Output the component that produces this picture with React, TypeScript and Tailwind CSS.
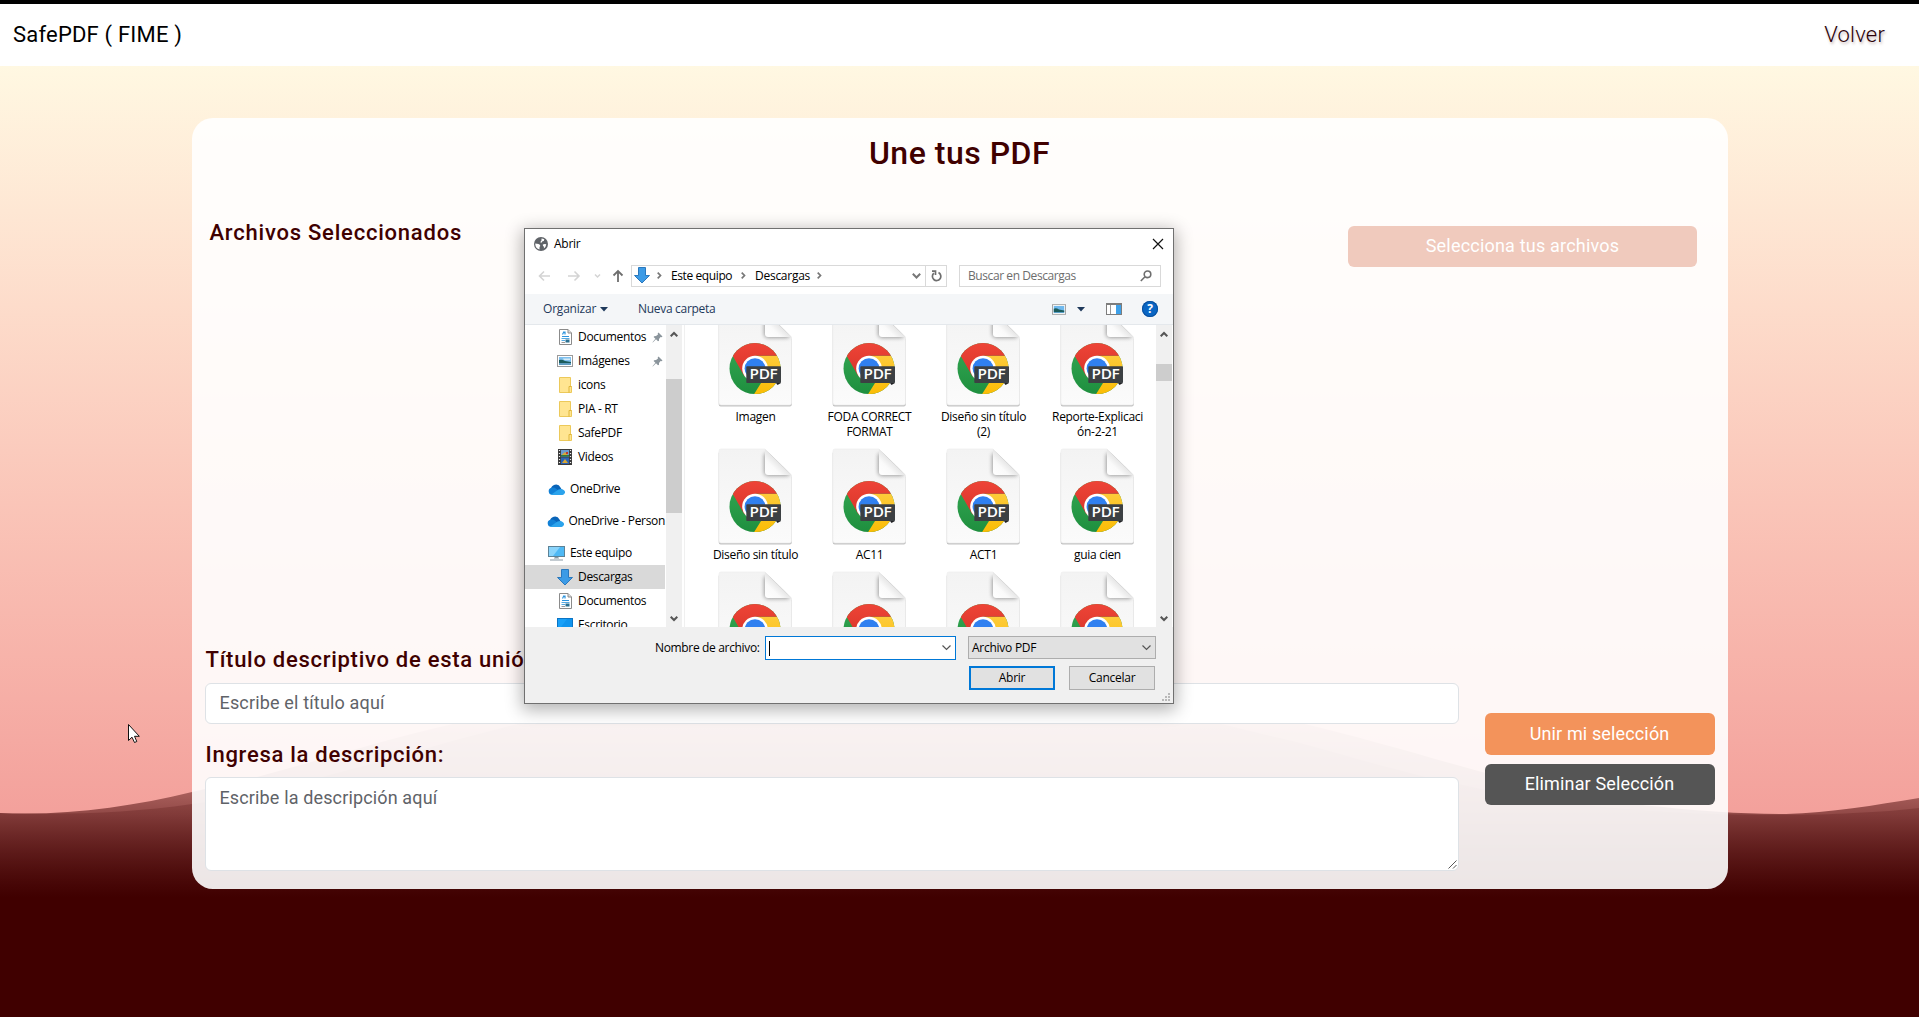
import React from "react";

function PdfIcon() {
  return (
    <svg width="77" height="99" viewBox="-2 -2 77 99" className="block shrink-0">
      <defs>
        <linearGradient id="paper" x1="0" y1="0" x2="0" y2="1">
          <stop offset="0" stopColor="#f3f3f3" />
          <stop offset="1" stopColor="#fbfbfb" />
        </linearGradient>
        <linearGradient id="fold" x1="0" y1="1" x2="1" y2="0">
          <stop offset="0" stopColor="#ffffff" />
          <stop offset="0.3" stopColor="#fafafa" />
          <stop offset="0.5" stopColor="#e6e6e6" />
        </linearGradient>
        <linearGradient id="red" x1="0" y1="0" x2="0" y2="1">
          <stop offset="0" stopColor="#ee4437" />
          <stop offset="1" stopColor="#d8352a" />
        </linearGradient>
        <linearGradient id="green" x1="0" y1="0" x2="0" y2="1">
          <stop offset="0" stopColor="#34a853" />
          <stop offset="1" stopColor="#1e8e3e" />
        </linearGradient>
        <linearGradient id="yellow" x1="0" y1="0" x2="0" y2="1">
          <stop offset="0" stopColor="#fdcb3a" />
          <stop offset="1" stopColor="#fbbc04" />
        </linearGradient>
        <filter id="soft" x="-20%" y="-20%" width="140%" height="140%">
          <feGaussianBlur stdDeviation="2" />
        </filter>
        <clipPath id="page">
          <path d="M2 0H46L72.500 26V92a2 2 0 0 1-2 2H2a2 2 0 0 1-2-2V2a2 2 0 0 1 2-2z" />
        </clipPath>
        <clipPath id="disc">
          <circle cx="36" cy="57.6" r="25.5" />
        </clipPath>
      </defs>
      <path d="M2 2H46L72.800 28V93.500a2 2 0 0 1-2 2H1.700a2 2 0 0 1-2-2V4a2 2 0 0 1 2-2z" fill="#000" opacity="0.24" />
      <path d="M2 0H46L72.500 26V92a2 2 0 0 1-2 2H2a2 2 0 0 1-2-2V2a2 2 0 0 1 2-2z" fill="url(#paper)" stroke="#ececec" strokeWidth="0.6" />
      <g clipPath="url(#page)">
        <path d="M45.500 5V23a3.500 3.500 0 0 0 3.500 3.500H70V20L52 4z" fill="#000" opacity="0.42" filter="url(#soft)" />
      </g>
      <path d="M46 0L72.500 26H49a3 3 0 0 1-3-3z" fill="url(#fold)" />
      <g clipPath="url(#disc)">
        <rect x="10" y="32" width="52" height="52" fill="url(#green)" />
        <path d="M36 44.800H62V84H34.500L47 64z" fill="url(#yellow)" />
        <path d="M10 32H62V44.800H36L25.500 65.500L13.500 44.500z" fill="url(#red)" />
      </g>
      <circle cx="36" cy="57.600" r="12.800" fill="#fff" />
      <circle cx="36" cy="57.600" r="10.400" fill="#3080f0" />
      <path d="M57 72H62L58.500 74z" fill="#202124" />
      <rect x="27.300" y="55.200" width="34.700" height="16.800" rx="0.800" fill="#3c4043" />
      <text x="30.500" y="68.200" fontFamily="Open Sans" fontWeight="600" fontSize="13.500" textLength="28" lengthAdjust="spacingAndGlyphs" fill="#fff">
        PDF
      </text>
    </svg>
  );
}

function FileItem({ name }: { name?: string }) {
  return (
    <div className="flex w-[114px] flex-col items-center">
      <PdfIcon />
      {name && (
        <p className="mt-[1px] w-[106px] whitespace-pre pl-px text-center text-[12px] leading-[15px] tracking-[-0.3px]">{name}</p>
      )}
    </div>
  );
}

const DownArrow = () => (
  <svg width="16" height="17" viewBox="0 0 16 17">
    <path d="M4.500 0.500H11.500V8.500H15.500L8 16L0.500 8.500H4.500z" fill="#3c9be6" stroke="#2a78bd" />
  </svg>
);
const DocIcon = () => (
  <svg width="13" height="16" viewBox="0 0 13 16">
    <path d="M0.500 0.500H9L12.500 4V15.500H0.500z" fill="#fff" stroke="#8b8b8b" />
    <path d="M9 0.500V4H12.500" fill="#ddd" stroke="#8b8b8b" />
    <path d="M5 2.500L3.500 5.500M6 2.500V5.500M3 7.500H10" stroke="#2c93dd" strokeWidth="1.200" fill="none" />
    <path d="M2.500 9.500H10.500M2.500 11.500H6" stroke="#55a9e2" />
    <rect x="6.500" y="10.500" width="4" height="3" fill="#2b6f8f" />
    <path d="M2.500 13.500H6" stroke="#999" />
  </svg>
);
const PictureIcon = () => (
  <svg width="16" height="12" viewBox="0 0 16 12">
    <rect x="0.500" y="0.500" width="15" height="11" fill="#fff" stroke="#9a9a9a" />
    <rect x="2" y="2" width="12" height="8" fill="#7fc0ee" />
    <path d="M2 5Q5 4 8 6L14 7V8H2z" fill="#1c5c5c" />
    <rect x="2" y="8" width="12" height="2" fill="#5f9cc0" />
    <path d="M6 3.500H13V5H7z" fill="#d5ecf8" />
  </svg>
);
const FolderIcon = () => (
  <svg width="13" height="17" viewBox="0 0 13 17">
    <path d="M0.500 0.500H11.500V9.500H12.500V15.500H0.500z" fill="#ffe591" stroke="#ecc95a" />
    <path d="M12.500 9.500H10V15.500" fill="none" stroke="#dfb63a" />
  </svg>
);
const VideoIcon = () => (
  <svg width="14" height="16" viewBox="0 0 14 16">
    <rect width="14" height="16" fill="#3c3c3c" />
    <path d="M1.500 1V16M12.500 1V16" stroke="#eee" strokeDasharray="1 2" strokeWidth="1.200" />
    <rect x="3" y="1" width="8" height="6.500" fill="#6a9bd0" />
    <rect x="3" y="8.500" width="8" height="6.500" fill="#2b63b5" />
    <path d="M3 6.500L7 3L10 6.500zM4 14L7 10L10 14z" fill="#d9a836" />
    <path d="M8 3h2v2h-2z" fill="#c0392b" />
    <path d="M3 6h8v1.500h-8z" fill="#2f7a3d" />
  </svg>
);
const CloudIcon = () => (
  <svg width="17" height="11" viewBox="0 0 17 11" className="-ml-[1px]">
    <path d="M3 6A5 5 0 0 1 12.500 3.500L14 6L7 9z" fill="#0a64b8" />
    <path d="M4 10.800A3.600 3.600 0 0 1 3.500 3.700Q6 3 8.500 5L13 8.500L9 10.800z" fill="#1180d6" />
    <path d="M3 10.700L10.500 5.500Q13.500 4 16 6.200A2.700 2.700 0 0 1 14.500 11H4z" fill="#2ba3ec" />
  </svg>
);
const PcIcon = () => (
  <svg width="17" height="15" viewBox="0 0 17 15" className="-ml-[1px]">
    <rect x="0.500" y="0.500" width="16" height="10" fill="#4fb9f5" stroke="#5d8296" />
    <path d="M1 1H12L5 10H1z" fill="#8ad4fb" />
    <path d="M6 12H11M2 14H15" stroke="#8798a3" />
    <path d="M8.500 11V12" stroke="#8798a3" strokeWidth="3" />
  </svg>
);
const DesktopIcon = () => (
  <svg width="16" height="14" viewBox="0 0 16 14">
    <rect x="0.500" y="0.500" width="15" height="13" fill="#18a0f8" stroke="#0b74c4" />
    <path d="M1 13L10 1H15V13z" fill="#0f94ee" />
  </svg>
);
const PinIcon = () => (
  <svg width="11" height="11" viewBox="0 0 11 11" className="absolute left-[127px]">
    <path d="M6.500 0.500L10.500 4.500L9.500 5.300L8.600 5L7 7L7 8.800L6 9.300L4 7.300L0.800 10.500L0.500 10.200L3.400 6.700L1.600 5L2.200 4.200L4 4L6 2.400L5.700 1.400z" fill="#8b959c" />
  </svg>
);

type Row = { label: string; icon: React.ReactNode; indent?: boolean; pin?: boolean; active?: boolean; gap?: boolean };
const rows: Row[] = [
  { label: "Documentos", icon: <DocIcon />, indent: true, pin: true },
  { label: "Imágenes", icon: <PictureIcon />, indent: true, pin: true },
  { label: "icons", icon: <FolderIcon />, indent: true },
  { label: "PIA - RT", icon: <FolderIcon />, indent: true },
  { label: "SafePDF", icon: <FolderIcon />, indent: true },
  { label: "Videos", icon: <VideoIcon />, indent: true },
  { label: "OneDrive", icon: <CloudIcon />, gap: true },
  { label: "OneDrive - Person", icon: <CloudIcon />, gap: true },
  { label: "Este equipo", icon: <PcIcon />, gap: true },
  { label: "Descargas", icon: <DownArrow />, indent: true, active: true },
  { label: "Documentos", icon: <DocIcon />, indent: true },
  { label: "Escritorio", icon: <DesktopIcon />, indent: true },
];

function Chevron({ d, w = 8, h = 5, color = "#555", sw = 2 }: { d: string; w?: number; h?: number; color?: string; sw?: number }) {
  return (
    <svg width={w} height={h} viewBox={`0 0 ${w} ${h}`} className="shrink-0">
      <path d={d} fill="none" stroke={color} strokeWidth={sw} />
    </svg>
  );
}
const Up = () => <Chevron d="M0.700 5.300L4 2L7.300 5.300" h={6} />;
const Down = () => <Chevron d="M0.700 0.700L4 4L7.300 0.700" h={6} />;
const Right = () => <Chevron d="M0.700 0.700L3.500 3.500L0.700 6.300" w={5} h={7} color="#777" sw={1.7} />;

function Dialog() {
  return (
    <div className="absolute left-[524px] top-[228px] flex h-[476px] w-[650px] flex-col border border-[#707070] bg-white font-['Open_Sans',sans-serif] text-[12px] tracking-[-0.26px] text-black shadow-[0_4px_16px_2px_rgba(0,0,0,0.3)]">
      <div className="flex h-[29px] items-center pl-[9px] pr-[9px]">
        <svg width="14" height="14" viewBox="0 0 14 14">
          <circle cx="7" cy="7" r="7" fill="#5f6368" />
          <path d="M1.300 6.500Q3 6.500 4.500 7Q6.300 7.500 6.300 9Q5.500 9.500 5.500 10.500V12.500Q1.500 11.500 1.300 7.500zM7.500 1.400Q9 1.400 10.300 2.300L9.800 4Q8 4 8 5Q7.500 6 6.500 5.500Q6.300 4.500 7.500 3.500zM8.800 7.500Q10 6.800 12.300 7.200Q12 10 9.800 11.500L10 9.700Q8.600 9.200 8.800 7.500z" fill="#fff" />
        </svg>
        <span className="ml-[6px] grow">Abrir</span>
        <svg width="12" height="12" viewBox="0 0 12 12">
          <path d="M1 1L11 11M11 1L1 11" stroke="#111" strokeWidth="1.200" />
        </svg>
      </div>
      <div className="flex h-[36px] items-center pb-px">
        <svg width="92" height="16" viewBox="0 0 92 16" className="ml-[13px] shrink-0" fill="none">
          <path d="M12 8H1.500M6 3.500L1.500 8L6 12.500" stroke="#d4d4d4" strokeWidth="1.600" />
          <path d="M30 8H41M36.500 3.500L41 8L36.500 12.500" stroke="#d4d4d4" strokeWidth="1.600" />
          <path d="M57 6.500L59.500 9L62 6.500" stroke="#d4d4d4" strokeWidth="1.500" />
          <path d="M80 14V3M75.500 7.500L80 3L84.500 7.500" stroke="#6e6e6e" strokeWidth="1.800" />
        </svg>
        <div className="ml-[1px] flex h-[22px] w-[316px] items-center border border-[#d9d9d9]">
          <span className="ml-[2px]"><DownArrow /></span>
          <span className="ml-[7px]"><Right /></span>
          <span className="ml-[9px] w-[61px] whitespace-nowrap tracking-[-0.4px]">Este equipo</span>
          <span className="ml-[9px]"><Right /></span>
          <span className="ml-[9px] w-[53px]">Descargas</span>
          <span className="ml-[9px] grow"><Right /></span>
          <Chevron d="M0.800 0.800L4.500 4.500L8.200 0.800" w={9} h={6} color="#777" />
          <span className="ml-[4px] flex h-full w-[21px] items-center justify-center border-l border-[#d9d9d9]">
            <svg width="11" height="12" viewBox="0 0 11 12" fill="none" stroke="#6e6e6e" strokeWidth="1.700">
              <path d="M7.500 2.600A4.200 4.200 0 1 1 2.800 3.200M1 1.200L4.500 1.200V5" />
            </svg>
          </span>
        </div>
        <div className="ml-[12px] flex h-[22px] w-[202px] items-center border border-[#d9d9d9] pl-[8px] pr-[8px] text-[#6d6d6d]">
          <span className="grow tracking-[-0.42px]">Buscar en Descargas</span>
          <svg width="12" height="12" viewBox="0 0 12 12" fill="none" stroke="#6e6e6e" strokeWidth="1.600">
            <circle cx="7.500" cy="4.300" r="3.300" />
            <path d="M5 6.800L0.800 11" />
          </svg>
        </div>
      </div>
      <div className="flex h-[31px] items-center border-b border-[#e4e8ec] bg-[#f4f6f8] text-[#1e395b]">
        <span className="ml-[18px] w-[51px] tracking-[-0.2px]">Organizar</span>
        <svg width="8" height="5" viewBox="0 0 8 5" className="ml-[6px]"><path d="M0 0H8L4 4.500z" fill="#1e395b" /></svg>
        <span className="ml-[30px] grow tracking-[-0.3px]">Nueva carpeta</span>
        <svg width="14" height="11" viewBox="0 0 16 12"><rect x="0.500" y="0.500" width="15" height="11" fill="#fff" stroke="#9a9a9a" /><rect x="2" y="2" width="12" height="8" fill="#6fb9ee" /><path d="M2 5Q5 4 8 6L14 7V9H2z" fill="#1c5c5c" /></svg>
        <svg width="8" height="5" viewBox="0 0 8 5" className="ml-[11px]"><path d="M0 0H8L4 4.500z" fill="#1e395b" /></svg>
        <svg width="16" height="12" viewBox="0 0 16 12" className="ml-[21px]">
          <rect x="0.500" y="0.500" width="15" height="11" fill="#fff" stroke="#7d7d7d" />
          <path d="M0 1H16" stroke="#7d7d7d" strokeWidth="2" />
          <path d="M4.500 2V11" stroke="#999" />
          <rect x="10" y="2" width="5" height="9" fill="#3ea0e8" />
        </svg>
        <span className="ml-[20px] mr-[15px] flex size-[16px] items-center justify-center rounded-full bg-[#0a66c4] text-[12px] font-bold text-white ring-1 ring-inset ring-[#0a4f9c]">?</span>
      </div>
      <div className="flex h-[302px] overflow-hidden">
        <div className="w-[141px] overflow-hidden">
          <div className="flex w-[140px] flex-col">
            {rows.map((r, i) => (
              <div
                key={i}
                className={`relative flex h-[24px] shrink-0 items-center ${r.gap ? "mt-[8px]" : ""} ${r.active ? "bg-[#d9d9d9]" : ""} ${r.indent ? "pl-[31px]" : "pl-[23px]"}`}
              >
                <span className="flex w-[18px] justify-center">{r.icon}</span>
                <span className="ml-[4px] whitespace-nowrap tracking-[-0.33px]">{r.label}</span>
                {r.pin && <PinIcon />}
              </div>
            ))}
          </div>
        </div>
        <div className="flex w-[16px] flex-col items-center bg-[#f0f0f0]">
          <span className="flex h-[17px] items-center"><Up /></span>
          <div className="mt-[37px] h-[134px] w-full bg-[#cdcdcd]" />
          <span className="mt-auto flex h-[17px] items-center"><Down /></span>
        </div>
        <div className="ml-[2px] flex w-[472px] flex-col overflow-hidden border-l border-[#f0f0f0]">
          <div className="-mt-[16px] ml-[13px] flex h-[138px] shrink-0">
            <FileItem name="Imagen" />
            <FileItem name={"FODA CORRECT\nFORMAT"} />
            <FileItem name={"Diseño sin título\n(2)"} />
            <FileItem name={"Reporte-Explicaci\nón-2-21"} />
          </div>
          <div className="ml-[13px] flex h-[123px] shrink-0">
            <FileItem name="Diseño sin título" />
            <FileItem name="AC11" />
            <FileItem name="ACT1" />
            <FileItem name="guia cien" />
          </div>
          <div className="ml-[13px] flex shrink-0">
            <FileItem />
            <FileItem />
            <FileItem />
            <FileItem />
          </div>
        </div>
        <div className="flex w-[16px] flex-col items-center bg-[#f0f0f0]">
          <span className="flex h-[17px] items-center"><Up /></span>
          <div className="mt-[22px] h-[17px] w-full bg-[#cdcdcd]" />
          <span className="mt-auto flex h-[17px] items-center"><Down /></span>
        </div>
      </div>
      <div className="relative grow bg-[#f0f0f0] pt-[9px]">
        <div className="flex items-center">
          <span className="ml-[130px] w-[110px] whitespace-nowrap tracking-[-0.34px]">Nombre de archivo:</span>
          <div className="flex h-[24px] w-[191px] items-center border border-[#0078d7] bg-white pl-[3px] pr-[4px]">
            <div className="mr-auto h-[15px] w-px bg-black" />
            <Chevron d="M0.500 0.500L4.500 4.500L8.500 0.500" w={9} h={6} sw={1.2} />
          </div>
          <div className="mb-px ml-[12px] flex h-[23px] w-[188px] items-center border border-[#adadad] bg-[#e1e1e1] pl-[3px] pr-[4px]">
            <span className="mr-auto">Archivo PDF</span>
            <Chevron d="M0.500 0.500L4.500 4.500L8.500 0.500" w={9} h={6} sw={1.2} />
          </div>
        </div>
        <div className="ml-[444px] mt-[6px] flex gap-[14px]">
          <div className="flex h-[24px] w-[86px] items-center justify-center border-2 border-[#0078d7] bg-[#e1e1e1]">Abrir</div>
          <div className="flex h-[24px] w-[86px] items-center justify-center border border-[#adadad] bg-[#e1e1e1]">Cancelar</div>
        </div>
        <svg width="8" height="8" viewBox="0 0 8 8" className="absolute bottom-[2px] right-[3px]" fill="#b8b8b8">
          <path d="M6 0h2v2h-2zM6 3h2v2h-2zM6 6h2v2h-2zM3 3h2v2h-2zM3 6h2v2h-2zM0 6h2v2h-2z" />
        </svg>
      </div>
    </div>
  );
}

function Waves() {
  return (
    <svg width="1919" height="951" viewBox="0 66 1919 951" className="absolute inset-0">
      <defs>
        <linearGradient id="outer" gradientUnits="userSpaceOnUse" x1="0" y1="700" x2="0" y2="897">
          <stop offset="0" stopColor="#400000" stopOpacity="0.08" />
          <stop offset="0.466" stopColor="#400000" stopOpacity="0.42" />
          <stop offset="1" stopColor="#400000" />
        </linearGradient>
        <linearGradient id="inner" gradientUnits="userSpaceOnUse" x1="0" y1="700" x2="0" y2="897">
          <stop offset="0" stopColor="#400000" stopOpacity="0.12" />
          <stop offset="0.580" stopColor="#400000" stopOpacity="0.2" />
          <stop offset="1" stopColor="#400000" stopOpacity="0.5" />
        </linearGradient>
      </defs>
      <path d="M0 813C65 816 130 807 192 792C215 787 236 782 257 777C325 759 390 738 453 724C640 682 760 665 880 665C1040 665 1160 690 1300 723C1365 738 1420 755 1482 772C1540 788 1605 802 1663 807C1700 811 1740 814 1786 814C1830 813 1875 805 1919 798V1017H0z" fill="url(#outer)" />
      <path d="M0 813C70 815 130 813 192 804C240 797 280 788 322 777C390 760 450 740 518 724C640 696 760 686 870 686C990 686 1110 700 1221 724L1300 743C1340 754 1385 767 1426 777C1500 794 1560 804 1625 809C1680 814 1790 817 1853 813C1880 812 1900 810 1919 808V1017H0z" fill="url(#inner)" />
    </svg>
  );
}

export default function App() {
  return (
    <div className="relative flex h-[1017px] w-[1919px] flex-col overflow-hidden bg-[#400000] font-['Roboto',sans-serif]">
      <header className="flex h-[66px] items-center justify-between border-t-4 border-black bg-white pb-px pl-[13px] pr-[34px] text-[22px]">
        <span className="tracking-[0.2px] text-black">SafePDF ( FIME )</span>
        <span className="font-light tracking-[0.2px] text-[#2a0008] [text-shadow:1px_2px_3px_rgba(60,0,0,0.3)]">Volver</span>
      </header>
      <main className="relative grow bg-linear-to-b from-[#fff8e2] from-0% to-[#f3a09b] to-[79%]">
        <Waves />
        <section className="relative mx-auto mt-[52px] flex h-[771px] w-[1536px] flex-col rounded-[21px] bg-white/90 text-[#400000]">
          <h1 className="mt-[15px] text-center text-[32px] font-medium leading-[40px] tracking-[0.5px]">Une tus PDF</h1>
          <div className="mt-[46px] flex items-start justify-between pl-[18px] pr-[31px]">
            <h2 className="mt-px text-[22px] font-medium leading-[26px] tracking-[0.78px]">Archivos Seleccionados</h2>
            <div className="mt-[7px] flex h-[41px] w-[349px] items-center justify-center rounded-[6px] bg-[#f0cabd] pb-[2px] pl-px text-[18px] tracking-[0.2px] text-white">Selecciona tus archivos</div>
          </div>
          <div className="mt-auto flex pb-[18px] pl-[13px]">
            <div className="w-[1254px]">
              <label className="block pl-px text-[22px] font-medium leading-[26px] tracking-[0.72px]">Título descriptivo de esta unión:</label>
              <div className="mt-[10px] flex h-[41px] items-center rounded-[6px] border border-[#dee2e6] bg-white pb-[2px] pl-[14px] text-[18px] tracking-[0.16px] text-[#5f6368]">Escribe el título aquí</div>
              <label className="mt-[18px] block pl-px text-[22px] font-medium leading-[26px] tracking-[0.72px]">Ingresa la descripción:</label>
              <div className="relative mt-[9px] h-[94px] rounded-[6px] border border-[#dee2e6] bg-white pl-[14px] pt-[6px] text-[18px] leading-[27px] tracking-[0.14px] text-[#5f6368]">
                Escribe la descripción aquí
                <svg width="9" height="9" viewBox="0 0 9 9" className="absolute bottom-px right-px" stroke="#444" strokeWidth="0.900">
                  <path d="M0.500 8.500L8.500 0.500M5 8.500L8.500 5" />
                </svg>
              </div>
            </div>
            <div className="ml-[26px] mt-[66px] w-[230px] text-[18px] text-white">
              <div className="flex h-[42px] items-center justify-center rounded-[6px] bg-[#f3935b] pb-px tracking-[0.14px]">Unir mi selección</div>
              <div className="mt-[9px] flex h-[41px] items-center justify-center rounded-[6px] bg-[#555] pb-[2px] tracking-[0.14px]">Eliminar Selección</div>
            </div>
          </div>
        </section>
      </main>
      <Dialog />
      <svg width="12" height="19" viewBox="0 0 12 19" className="absolute left-[128px] top-[724px]">
        <path d="M0.500 0.500V16.500L4 13.200L6.500 18.500L8.800 17.500L6.500 12.300H11.300z" fill="#fff" stroke="#111" />
      </svg>
    </div>
  );
}
